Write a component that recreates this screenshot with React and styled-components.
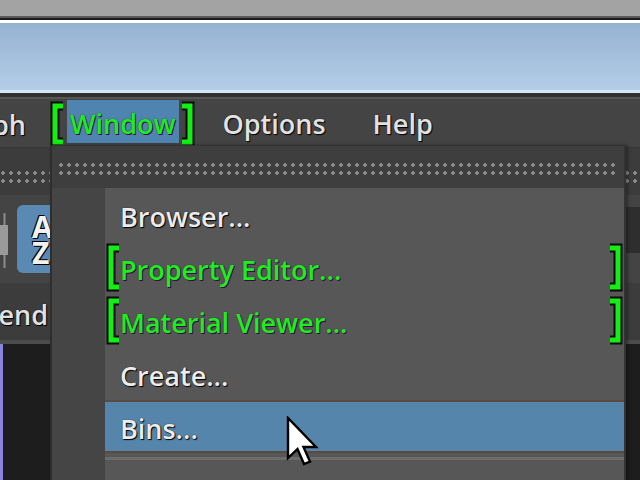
import React from "react";
import styled, { createGlobalStyle, css } from "styled-components";

const GlobalStyle = createGlobalStyle`
  html, body { margin: 0; padding: 0; background: #3a3a3a; overflow: hidden; }
  body { font-family: "Open Sans", "Noto Sans", sans-serif; }
`;

const dots = css`
  background-image: radial-gradient(circle at 3px 3px, #8e8e8e 1.5px, transparent 2.1px);
  background-size: 8px 8px;
`;

const outlined = css`
  text-shadow: 0 0 1px #000, 1px 1px 1px #000;
`;

const Screen = styled.div`
  position: relative;
  width: 640px;
  height: 480px;
  overflow: hidden;
  display: flex;
  flex-direction: column;
  background: #3a3a3a;
  font-size: 27px;
  font-weight: 600;
`;

const TopStrip = styled.div`
  height: 16px;
  background: #a3a3a3;
  border-bottom: 2px solid #5a5a5a;
`;

const TitleBar = styled.div`
  height: 73px;
  border-top: 2px solid #1c1c1c;
  border-bottom: 4px solid #313131;
  background: linear-gradient(#fff 0 3px, #96b2d2 3px, #b4cee8 70px, #d4e6f7 70px);
`;

const MenuBar = styled.div`
  height: 48px;
  display: flex;
  align-items: stretch;
  gap: 41px;
  background: #444;
  border-top: 2px solid #555;
  border-bottom: 1px solid #383838;
`;

const MenuTitle = styled.div`
  position: relative;
  display: flex;
  align-items: center;
  padding: 3px 3px 0;
  margin: 1px 0 4px;
  color: ${(p) => (p.$marked ? "#1cf01c" : "#e2e2e2")};
  background: ${(p) => (p.$active ? "#4f84b0" : "transparent")};
  ${(p) =>
    p.$marked
      ? "text-shadow: 0 0 1px #3a0a46, 1px 1px 0 #3a0a46;"
      : "text-shadow: 0 0 1px #000, 1px 1px 1px #000;"}
`;

const Clipped = styled.div`
  width: ${(p) => p.$w}px;
  flex: none;
  display: flex;
  justify-content: flex-end;
  align-items: center;
  overflow: hidden;
  white-space: nowrap;
  color: #e2e2e2;
  padding-top: ${(p) => p.$pt ?? 0}px;
  ${outlined}
`;

const Workspace = styled.div`
  flex: 1;
  display: flex;
  flex-direction: column;
`;

const HandleRow = styled.div`
  height: 47px;
  background: #3c3c3c;
  padding-top: 22px;
  box-sizing: border-box;
`;

const Dots = styled.div`
  height: 16px;
  ${dots}
`;

const ToolRow = styled.div`
  height: 88px;
  display: flex;
  align-items: flex-start;
  background: #444;
`;

const SliderIcon = styled.svg`
  margin-top: 18px;
  flex: none;
`;

const SortButton = styled.div`
  margin: 10px 0 0 8px;
  width: 42px;
  height: 68px;
  border-radius: 6px;
  background: #5a8ab4;
  display: flex;
  flex-direction: column;
  align-items: flex-start;
  padding: 9px 0 0 15px;
  box-sizing: border-box;
  font-size: 30px;
  font-weight: 700;
  line-height: 26px;
  color: #f2f2f2;
  text-shadow: 0 0 1px #000, 1px 1px 0 #000, -1px -1px 0 #000;
`;

const Field = styled.div`
  margin: 12px 0 0 auto;
  width: 200px;
  height: 46px;
  background: #2e2e2e;
`;

const TabRow = styled.div`
  height: 57px;
  display: flex;
  align-items: center;
  background: #3c3c3c;
  border-bottom: 4px solid #4c4c4c;
`;

const RightTab = styled.div`
  margin-left: auto;
  width: 200px;
  padding: 6px 0 0 4px;
  color: #e2e2e2;
  ${outlined}
`;

const Canvas = styled.div`
  flex: 1;
  background: #1d1d1d;
  border-left: 3px solid #8c84dc;
`;

const Popup = styled.div`
  position: absolute;
  left: 50px;
  top: 145px;
  width: 572px;
  height: 360px;
  display: flex;
  flex-direction: column;
  border-left: 2px solid #2e2e2e;
  border-right: 2px solid #333;
  box-shadow: 2px 0 3px rgba(0, 0, 0, 0.35);
`;

const TearOff = styled.div`
  height: 43px;
  background: #3e3e3e;
  border-top: 1px solid #333;
  padding: 16px 6px 0;
  box-sizing: border-box;
`;

const Body = styled.div`
  flex: 1;
  display: flex;
`;

const Gutter = styled.div`
  width: 53px;
  background: #454545;
`;

const List = styled.div`
  flex: 1;
  background: #575757;
  display: flex;
  flex-direction: column;
`;

const Item = styled.div`
  position: relative;
  height: 53px;
  box-sizing: border-box;
  display: flex;
  align-items: center;
  padding: 3px 0 0 15px;
  white-space: nowrap;
  color: ${(p) => (p.$marked ? "#1cf01c" : "#ececec")};
  ${(p) =>
    p.$marked
      ? "text-shadow: 0 0 1px #3a0a46, 1px 1px 0 #3a0a46;"
      : "text-shadow: 0 0 1px #000, 1px 1px 1px #000;"}
  ${(p) =>
    p.$hover &&
    css`
      background: #5585ab;
      border-top: 2px solid #5a4a3f;
      border-bottom: 2px solid #5a4a3f;
    `}
`;

const Separator = styled.div`
  height: 3px;
  margin-top: 4px;
  background: #6c6c6c;
`;

const BracketSvg = styled.svg`
  position: absolute;
  top: ${(p) => p.$top ?? 0}px;
  ${(p) => (p.$side === "left" ? "left" : "right")}: ${(p) => p.$off}px;
`;

const Cursor = styled.svg`
  position: absolute;
  left: 286px;
  top: 416px;
`;

function Bracket({ side, off, top, h = 46 }) {
  const d =
    side === "left"
      ? `M14,5 H6 V${h - 5} H14`
      : `M4,5 H12 V${h - 5} H4`;
  return (
    <BracketSvg $side={side} $off={off} $top={top} width="18" height={h} viewBox={`0 0 18 ${h}`}>
      <path d={d} fill="none" stroke="#0a0a0a" strokeWidth="9" strokeLinejoin="miter" />
      <path d={d} fill="none" stroke="#14ee14" strokeWidth="5" strokeLinejoin="miter" />
    </BracketSvg>
  );
}

const items = [
  { label: "Browser..." },
  { label: "Property Editor...", marked: true },
  { label: "Material Viewer...", marked: true },
  { label: "Create..." },
  { label: "Bins...", hover: true },
];

export default function App() {
  return (
    <>
      <GlobalStyle />
      <Screen>
        <TopStrip />
        <TitleBar />
        <MenuBar>
          <Clipped $w={26} $pt={3}>Graph</Clipped>
          <MenuTitle $active $marked>
            <Bracket side="left" off={-18} top={1} />
            Window
            <Bracket side="right" off={-17} top={1} />
          </MenuTitle>
          <MenuTitle>Options</MenuTitle>
          <MenuTitle>Help</MenuTitle>
        </MenuBar>
        <Workspace>
          <HandleRow>
            <Dots />
          </HandleRow>
          <ToolRow>
            <SliderIcon width="9" height="55" viewBox="0 0 9 55">
              <line x1="4.5" y1="0" x2="4.5" y2="55" stroke="#8c8c8c" strokeWidth="2" />
              <rect x="0" y="12" width="8" height="30" fill="#9a9a9a" />
            </SliderIcon>
            <SortButton>
              <span>A</span>
              <span>Z</span>
            </SortButton>
            <Field />
          </ToolRow>
          <TabRow>
            <Clipped $w={48} $pt={6}>Legend</Clipped>
            <RightTab>Graph</RightTab>
          </TabRow>
          <Canvas />
        </Workspace>

        <Popup>
          <TearOff>
            <Dots />
          </TearOff>
          <Body>
            <Gutter />
            <List>
              {items.map((it) => (
                <Item key={it.label} $marked={it.marked} $hover={it.hover}>
                  {it.marked && <Bracket side="left" off={0} top={2} h={49} />}
                  {it.label}
                  {it.marked && <Bracket side="right" off={0} top={2} h={49} />}
                </Item>
              ))}
              <Separator />
            </List>
          </Body>
        </Popup>

        <Cursor width="36" height="56" viewBox="0 0 36 56">
          <path
            d="M2,2 L2,42 L11.5,33 L18,48 L24,45.5 L17.5,31 L30,31 Z"
            fill="#fff"
            stroke="#000"
            strokeWidth="2.4"
            strokeLinejoin="miter"
          />
        </Cursor>
      </Screen>
    </>
  );
}
